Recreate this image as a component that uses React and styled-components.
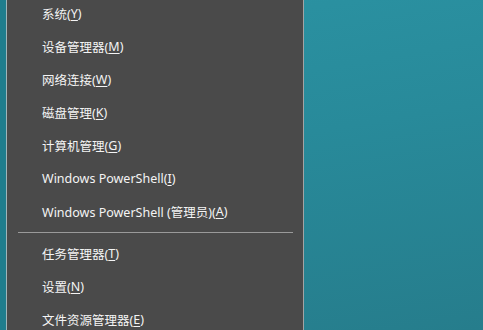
import React from "react";
import styled, { createGlobalStyle } from "styled-components";

const Global = createGlobalStyle`
  html, body { margin: 0; padding: 0; height: 100%; overflow: hidden; }
  body {
    background: linear-gradient(170deg, #2b93a3 0%, #288a9a 45%, #267d8c 100%);
    font-family: "Noto Sans", "Noto Sans CJK SC", sans-serif;
  }
`;

const Desktop = styled.div`
  display: flex;
  width: 483px;
  height: 330px;
  overflow: hidden;
`;

const EdgeStrip = styled.div`
  width: 6px;
  flex: none;
  background: #1f7d8d;
`;

const Panel = styled.div`
  width: 296px;
  flex: none;
  background: #4a4a4a;
  border-left: 1px solid #9fb5ba;
  border-right: 1px solid #a3a3a3;
  display: flex;
  flex-direction: column;
  margin-top: -3px;
`;

const Item = styled.div`
  height: 33px;
  flex: none;
  display: flex;
  align-items: center;
  padding-left: 35px;
  color: #f4f4f4;
  font-size: 12.5px;
  font-family: "Noto Sans", "Noto Sans CJK SC", sans-serif;
  white-space: nowrap;
`;

const Key = styled.span`
  text-decoration: underline;
  text-underline-offset: 2px;
`;

const Separator = styled.div`
  height: 1px;
  flex: none;
  background: #9a9a9a;
  margin: 4px 10px 4px 11px;
`;

const items1 = [
  ["系统", "Y"],
  ["设备管理器", "M"],
  ["网络连接", "W"],
  ["磁盘管理", "K"],
  ["计算机管理", "G"],
  ["Windows PowerShell", "I"],
  ["Windows PowerShell (管理员)", "A"],
];
const items2 = [
  ["任务管理器", "T"],
  ["设置", "N"],
  ["文件资源管理器", "E"],
];

const Row = ({ label, k }) => (
  <Item>
    {label}(<Key>{k}</Key>)
  </Item>
);

export default function App() {
  return (
    <>
      <Global />
      <Desktop>
        <EdgeStrip />
        <Panel>
          {items1.map(([l, k]) => (
            <Row key={k} label={l} k={k} />
          ))}
          <Separator />
          {items2.map(([l, k]) => (
            <Row key={k} label={l} k={k} />
          ))}
        </Panel>
      </Desktop>
    </>
  );
}
